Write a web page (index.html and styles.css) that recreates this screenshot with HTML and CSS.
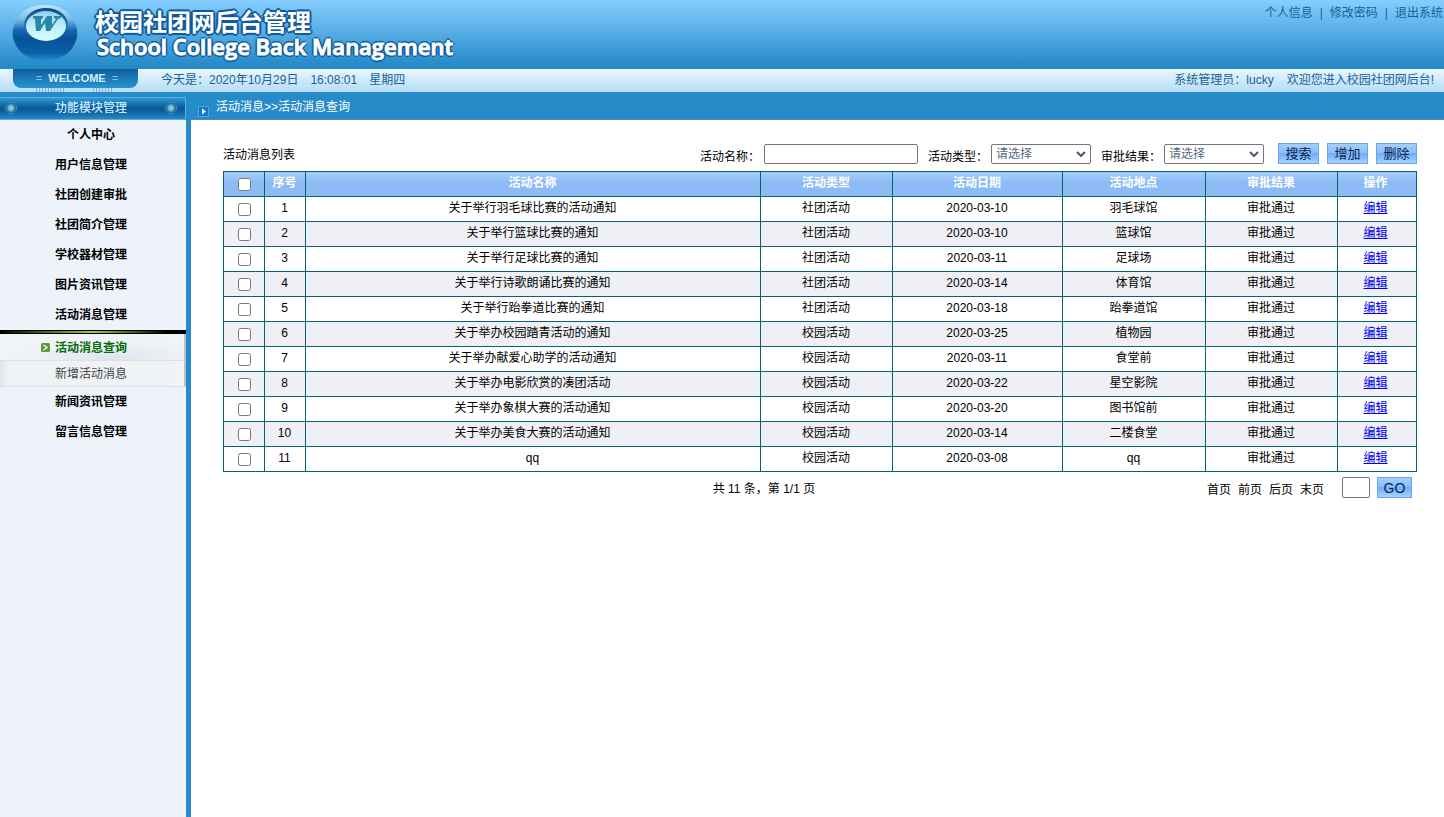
FILE: index.html
```html
<!DOCTYPE html>
<html lang="zh-CN">
<head>
<meta charset="utf-8">
<title>校园社团网后台管理</title>
<link rel="stylesheet" href="styles.css">
</head>
<body>
<header class="banner">
  <div class="brand">
    <svg class="logo" viewBox="0 0 66 58" aria-hidden="true">
      <defs>
        <linearGradient id="ball" x1="0" y1="0" x2="0" y2="1"><stop offset="0" stop-color="#c0e8fb"/><stop offset=".25" stop-color="#7bbfe8"/><stop offset=".45" stop-color="#1268b0"/><stop offset=".6" stop-color="#08519a"/><stop offset=".85" stop-color="#0b60a8"/><stop offset="1" stop-color="#2a90cc"/></linearGradient>
        <linearGradient id="rim" x1="0" y1="0" x2="0" y2="1"><stop offset="0" stop-color="#0a4c8e"/><stop offset=".5" stop-color="#2676b8"/><stop offset="1" stop-color="#0b559c"/></linearGradient>
        <linearGradient id="glass" x1="0" y1="0" x2="0" y2="1"><stop offset="0" stop-color="#8fd0ec"/><stop offset=".5" stop-color="#bdeef8"/><stop offset="1" stop-color="#d6ffff"/></linearGradient>
      </defs>
      <path d="M33 1C47 1 56 6 61 16C65 22 66 27 65 33C62 48 49 57 33 57C17 57 4 48 1 33C0 27 1 22 5 16C10 6 19 1 33 1Z" fill="url(#ball)"/>
      <ellipse cx="34" cy="21" rx="22" ry="17" fill="url(#rim)"/>
      <ellipse cx="34" cy="22" rx="20" ry="15" fill="url(#glass)"/>
      <path d="M21 12H31V14L29 15L29 21L35 12H40L40 21L44 15L42 14V12H49V14L46 15L38 27H34L33 19L28 27H24L23 15L21 14Z" fill="#2b87a8"/>
    </svg>
    <div class="titles">
      <h1 class="title-cn">校园社团网后台管理</h1>
      <p class="title-en">School College Back Management</p>
    </div>
  </div>
  <nav class="account">
    <a href="#">个人信息</a><span>|</span><a href="#">修改密码</a><span>|</span><a href="#">退出系统</a>
  </nav>
</header>
<div class="status">
  <div class="welcome"><span>=</span><b>WELCOME</b><span>=</span></div>
  <div class="today"><span>今天是：2020年10月29日</span><span>16:08:01</span><span>星期四</span></div>
  <div class="user"><span>系统管理员：lucky</span><span>欢迎您进入校园社团网后台!</span></div>
</div>
<div class="page">
  <aside class="side">
    <h2 class="side-head"><i class="bolt"></i><span>功能模块管理</span><i class="bolt"></i></h2>
    <nav class="menu">
      <a href="#">个人中心</a>
      <a href="#">用户信息管理</a>
      <a href="#">社团创建审批</a>
      <a href="#">社团简介管理</a>
      <a href="#">学校器材管理</a>
      <a href="#">图片资讯管理</a>
      <a href="#">活动消息管理</a>
      <div class="submenu">
        <a href="#" class="current"><svg class="arrow" viewBox="0 0 9 9" aria-hidden="true"><rect width="9" height="9" rx="1.500" fill="#5a9c35"/><path d="M2.500 2L6 4.500L2.500 7" fill="none" stroke="#fff" stroke-width="1.300"/></svg>活动消息查询</a>
        <a href="#">新增活动消息</a>
      </div>
      <a href="#">新闻资讯管理</a>
      <a href="#">留言信息管理</a>
    </nav>
  </aside>
  <main class="main">
    <div class="crumb">
      <svg class="crumb-icon" viewBox="0 0 11 11" aria-hidden="true"><rect x=".5" y=".5" width="10" height="10" fill="#1579cf" stroke="#48a6e8"/><path d="M4 2.500L8 5.500L4 8.500Z" fill="#fff"/></svg>
      <span>活动消息&gt;&gt;活动消息查询</span>
    </div>
    <div class="content">
      <form class="toolbar">
        <h3 class="list-title">活动消息列表</h3>
        <label for="name">活动名称：</label><input class="field name" id="name" type="text">
        <label for="type">活动类型：</label><span class="pick"><select id="type"><option>请选择</option></select><svg viewBox="0 0 10 6" aria-hidden="true"><path d="M1 1L5 5L9 1"/></svg></span>
        <label for="result">审批结果：</label><span class="pick"><select id="result"><option>请选择</option></select><svg viewBox="0 0 10 6" aria-hidden="true"><path d="M1 1L5 5L9 1"/></svg></span>
        <div class="actions"><button type="button">搜索</button><button type="button">增加</button><button type="button">删除</button></div>
      </form>
      <table class="list">
        <colgroup><col class="c-s"><col class="c-s"><col><col class="c-m"><col class="c-date"><col class="c-place"><col class="c-m"><col class="c-op"></colgroup>
        <thead><tr><th><input type="checkbox" aria-label="全选"></th><th>序号</th><th>活动名称</th><th>活动类型</th><th>活动日期</th><th>活动地点</th><th>审批结果</th><th>操作</th></tr></thead>
        <tbody>
          <tr><td><input type="checkbox" aria-label="选择 1"></td><td>1</td><td>关于举行羽毛球比赛的活动通知</td><td>社团活动</td><td>2020-03-10</td><td>羽毛球馆</td><td>审批通过</td><td><a href="#">编辑</a></td></tr>
          <tr><td><input type="checkbox" aria-label="选择 2"></td><td>2</td><td>关于举行篮球比赛的通知</td><td>社团活动</td><td>2020-03-10</td><td>篮球馆</td><td>审批通过</td><td><a href="#">编辑</a></td></tr>
          <tr><td><input type="checkbox" aria-label="选择 3"></td><td>3</td><td>关于举行足球比赛的通知</td><td>社团活动</td><td>2020-03-11</td><td>足球场</td><td>审批通过</td><td><a href="#">编辑</a></td></tr>
          <tr><td><input type="checkbox" aria-label="选择 4"></td><td>4</td><td>关于举行诗歌朗诵比赛的通知</td><td>社团活动</td><td>2020-03-14</td><td>体育馆</td><td>审批通过</td><td><a href="#">编辑</a></td></tr>
          <tr><td><input type="checkbox" aria-label="选择 5"></td><td>5</td><td>关于举行跆拳道比赛的通知</td><td>社团活动</td><td>2020-03-18</td><td>跆拳道馆</td><td>审批通过</td><td><a href="#">编辑</a></td></tr>
          <tr><td><input type="checkbox" aria-label="选择 6"></td><td>6</td><td>关于举办校园踏青活动的通知</td><td>校园活动</td><td>2020-03-25</td><td>植物园</td><td>审批通过</td><td><a href="#">编辑</a></td></tr>
          <tr><td><input type="checkbox" aria-label="选择 7"></td><td>7</td><td>关于举办献爱心助学的活动通知</td><td>校园活动</td><td>2020-03-11</td><td>食堂前</td><td>审批通过</td><td><a href="#">编辑</a></td></tr>
          <tr><td><input type="checkbox" aria-label="选择 8"></td><td>8</td><td>关于举办电影欣赏的凑团活动</td><td>校园活动</td><td>2020-03-22</td><td>星空影院</td><td>审批通过</td><td><a href="#">编辑</a></td></tr>
          <tr><td><input type="checkbox" aria-label="选择 9"></td><td>9</td><td>关于举办象棋大赛的活动通知</td><td>校园活动</td><td>2020-03-20</td><td>图书馆前</td><td>审批通过</td><td><a href="#">编辑</a></td></tr>
          <tr><td><input type="checkbox" aria-label="选择 10"></td><td>10</td><td>关于举办美食大赛的活动通知</td><td>校园活动</td><td>2020-03-14</td><td>二楼食堂</td><td>审批通过</td><td><a href="#">编辑</a></td></tr>
          <tr><td><input type="checkbox" aria-label="选择 11"></td><td>11</td><td>qq</td><td>校园活动</td><td>2020-03-08</td><td>qq</td><td>审批通过</td><td><a href="#">编辑</a></td></tr>
        </tbody>
      </table>
      <form class="pager">
        <p class="total">共 11 条，第 1/1 页</p>
        <div class="pages"><a href="#">首页</a><a href="#">前页</a><a href="#">后页</a><a href="#">末页</a></div>
        <input class="field jump" type="text" aria-label="页码"><button type="button">GO</button>
      </form>
    </div>
  </main>
</div>
</body>
</html>
```

FILE: styles.css
```css
* { box-sizing: border-box; }

body {
  margin: 0;
  min-height: 100vh;
  display: flex;
  flex-direction: column;
  background: #fff;
  color: #000;
  font: 12px/16px "Liberation Sans", "Noto Sans CJK SC", sans-serif;
}

h1, h2, h3, p { margin: 0; }
a { color: inherit; text-decoration: none; }

/* Banner */
.banner {
  display: flex;
  justify-content: space-between;
  min-height: 69px;
  background: linear-gradient(#86ceff, #268bc9 94%);
}
.brand { display: flex; gap: 17px; padding: 4px 0 0 12px; }
.logo { width: 66px; height: 58px; }
.titles {
  padding-top: 7px;
  color: #fff;
  white-space: nowrap;
  -webkit-text-stroke: 1px #fff;
  text-shadow: -1px -1px #10599a, 1px -1px #10599a, -1px 1px #10599a, 1px 1px #10599a,
    2px 0 #10599a, -2px 0 #10599a, 0 2px #10599a, 0 -2px #10599a, 0 0 3px #10599a;
}
.title-cn { font: bold 24px/24px "Liberation Sans", "Noto Sans CJK SC", sans-serif; -webkit-text-stroke: 0; }
.title-en { padding-left: 2px; font: 600 22px/22px "Open Sans", sans-serif; }
.account { display: flex; gap: 7px; padding: 5px 1px 0 0; color: #14639b; }

/* Status strip */
.status {
  display: flex;
  min-height: 23px;
  background: linear-gradient(#eaf6fe, #b5dcf5);
  color: #14639b;
  line-height: 22px;
}
.welcome {
  position: relative;
  display: flex;
  justify-content: center;
  gap: 6px;
  width: 125px;
  height: 19px;
  margin: 0 23px 0 13px;
  padding-left: 3px;
  border-radius: 0 0 8px 8px;
  background: linear-gradient(#0e5f9c, #2894d2);
  color: #d3efff;
  font-size: 11px;
  line-height: 19px;
}
.welcome span { color: #7cc3ea; }
.welcome::after {
  content: "";
  position: absolute;
  top: 19px;
  left: 23px;
  width: 78px;
  height: 4px;
  background:
    linear-gradient(90deg, transparent 28px, #bbdff5 28px, #bbdff5 55px, transparent 55px),
    repeating-linear-gradient(90deg, #86b4d2 0 1px, transparent 1px 3px);
}
.today, .user { display: flex; gap: 12px; }
.user { gap: 13px; margin-left: auto; padding-right: 10px; }

/* Page body */
.page { flex: 1; display: flex; background: #268bc9; }
.side {
  display: flex;
  flex-direction: column;
  width: 191px;
  padding: 5px 5px 0 0;
}
.side-head {
  display: flex;
  align-items: center;
  justify-content: space-between;
  height: 23px;
  padding: 0 8px 1px 5px;
  border: solid #56aee2;
  border-width: 1px 1px 1px 0;
  background: linear-gradient(#2d98d6, #0d5c99 45%, #0d5c99 60%, #2489c7);
  color: #c9ecff;
  font-size: 12px;
  font-weight: 500;
}
.bolt {
  width: 12px;
  height: 12px;
  border: 1px solid #3c93c6;
  border-radius: 50%;
  background: radial-gradient(#a9dced, #5fa7c2 3px, #0b5187 5px);
}
.menu { flex: 1; background: #edf2fb; text-align: center; }
.menu > a { display: block; padding-right: 4px; font-weight: bold; line-height: 30px; }
.submenu {
  padding-top: 4px;
  background: linear-gradient(90deg, #000, #a8cc35 50%, #000 90%) 0 1px / 100% 2px no-repeat,
    linear-gradient(#000, #000) 0 0 / 100% 4px no-repeat;
}
.submenu a {
  position: relative;
  display: block;
  height: 26px;
  padding-right: 2px;
  border-right: 2px solid #b9c0cc;
  border-bottom: 1px solid #dde1e6;
  background: linear-gradient(90deg, #e1e5ea, #eff2f5 5%, #eff2f5 90%, #f4f6f8);
  color: #444;
  line-height: 26px;
}
.submenu .current {
  height: 27px;
  background: radial-gradient(ellipse at 60% 100%, #dfe3ef, #eef1f6 50%, #f1f4f8 75%);
  color: #086c08;
  font-weight: bold;
  line-height: 28px;
}
.arrow { position: absolute; top: 9px; left: 41px; width: 9px; height: 9px; }

.main { flex: 1; background: #fff; }
.crumb {
  display: flex;
  gap: 7px;
  height: 28px;
  padding: 7px 0 0 7px;
  border-bottom: 1px solid #5f87a5;
  background: #268bc9;
  color: #fff;
}
.crumb-icon { width: 11px; height: 11px; margin-top: 7px; }
.content { padding: 23px 27px 0 32px; }

.toolbar { display: flex; align-items: flex-end; min-height: 22px; margin-bottom: 6px; }
.list-title { margin: 0 auto 2px 0; font-size: 12px; font-weight: normal; }
.toolbar label { width: 63px; }
.field {
  height: 20px;
  border: 1px solid #767676;
  border-radius: 2px;
  background: #fff;
  font: inherit;
}
.name { width: 154px; margin: 0 10px 1px 1px; }
.pick { position: relative; width: 100px; height: 20px; margin: 0 10px 1px 0; }
.pick select {
  appearance: none;
  width: 100%;
  height: 20px;
  padding: 0 16px 1px 4px;
  border: 1px solid #767676;
  border-radius: 2px;
  background: #fff;
  color: #4f6b85;
  font: inherit;
}
.pick svg {
  position: absolute;
  top: 7px;
  right: 5px;
  width: 10px;
  height: 6px;
  fill: none;
  stroke: #405872;
  stroke-width: 2;
  pointer-events: none;
}
.actions { display: flex; gap: 8px; padding: 0 0 1px 4px; }
button {
  height: 21px;
  min-width: 35px;
  padding: 0 6px;
  border: 1px solid #6fa5e6;
  background: linear-gradient(#a5cdfb, #8cbffb 45%, #70adfa 50%, #a7d0fd);
  color: #06264d;
  font: 13px/18px "Liberation Sans", "Noto Sans CJK SC", sans-serif;
}
.actions button { min-width: 41px; }

/* Data table */
.list { width: 100%; border-collapse: collapse; table-layout: fixed; text-align: center; }
.c-s { width: 41px; }
.c-m { width: 132px; }
.c-date { width: 170px; }
.c-place { width: 143px; }
.c-op { width: 79px; }
.list th, .list td { height: 25px; padding: 0 1px 2px 0; border: 1px solid #05636f; }
.list tr > :first-child { padding: 0; }
.list tr > :last-child { padding-right: 3px; }
.list th { background: linear-gradient(#a9d0fb, #8cbbf5 40%, #8cbbf5); color: #fff; }
.list tbody tr:nth-child(even) { background: #eef0f5; }
.list td a { color: #00e; text-decoration: underline; }
.list input { display: block; width: 13px; height: 13px; margin: 0 auto; }

/* Pager */
.pager { display: flex; align-items: flex-start; padding: 5px 5px 0 0; }
.total { flex: 1; padding: 4px 0 0 98px; text-align: center; }
.pages { display: flex; gap: 7px; padding: 5px 18px 0 0; }
.jump { width: 28px; height: 21px; margin-right: 7px; }
.pager button { padding: 0 5px; font-size: 14px; }
```
